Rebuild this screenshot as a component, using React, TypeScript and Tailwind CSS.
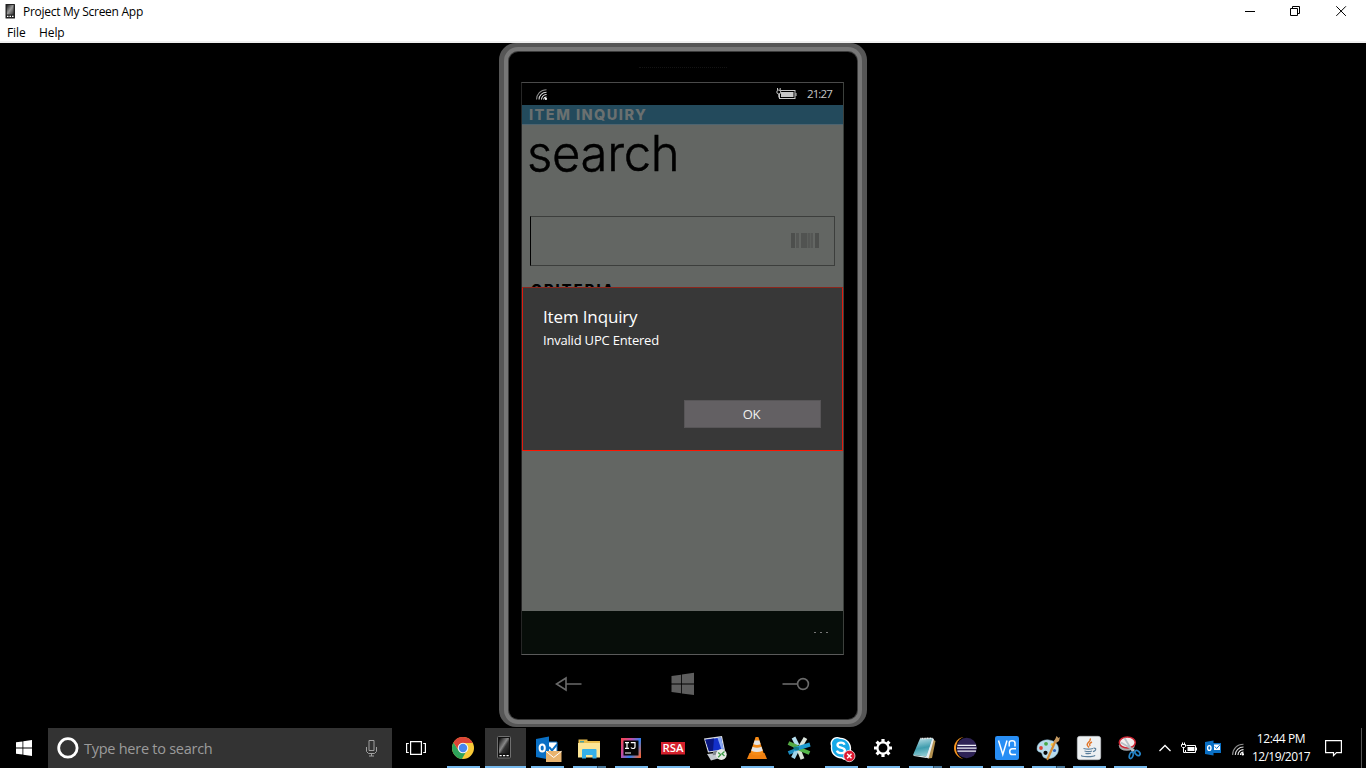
import type { ReactNode } from "react";

const UI = "font-['Open_Sans','Noto_Sans',sans-serif]";

function TitleBar() {
  return (
    <header className={`flex h-[43px] flex-col border-b-2 border-[#f0f0f0] bg-white text-black ${UI}`}>
      <div className="flex h-[23px] items-center">
        <svg className="ml-[5px] h-[16px] w-[10px]" viewBox="0 0 10 16">
          <defs>
            <linearGradient id="tp" x1="0" y1="0" x2="1" y2="1">
              <stop offset="0" stopColor="#222" />
              <stop offset="0.5" stopColor="#999" />
              <stop offset="1" stopColor="#333" />
            </linearGradient>
          </defs>
          <rect x="0.5" y="0" width="9.5" height="14.5" rx="0.6" fill="#222" />
          <rect x="1.8" y="1" width="6.800" height="9.500" fill="url(#tp)" />
          <path d="M2 12.400h1.500M4.500 12.400h1.500M7 12.400h1.500" stroke="#fff" strokeWidth="1.200" />
        </svg>
        <span className="ml-[8px] text-[12px] leading-[16px] tracking-[-0.27px] whitespace-nowrap">
          Project My Screen App
        </span>
        <div className="ml-auto flex h-full items-center">
          <svg className="h-[20px] w-[140px]" viewBox="0 0 140 20" fill="none" stroke="#000" strokeWidth="1">
            <path d="M19 9.500h10" />
            <path d="M64.500 6.500h7v7h-7zM66.500 6.500v-2h7v7h-2" />
            <path d="M110.300 4.300l9.600 9.600M119.900 4.300l-9.600 9.600" />
          </svg>
        </div>
      </div>
      <nav className="flex h-[18px] items-center pt-[2px] text-[12px] leading-[16px] whitespace-nowrap">
        <span className="ml-[7px] w-[32px] tracking-[-0.1px]">File</span>
        <span className="tracking-[-0.1px]">Help</span>
      </nav>
    </header>
  );
}

function Wifi({ className }: { className: string }) {
  return (
    <svg className={className} viewBox="0 0 12 12" fill="none" strokeWidth="1.1">
      <path d="M0.6 11.5C0.6 5.5 5 0.8 11.5 0.8" stroke="#8d8d8d" />
      <path d="M3.3 11.5C3.3 7 6.8 3.5 11.5 3.5" stroke="#d8d8d8" />
      <path d="M6 11.5C6 8.4 8.4 6.1 11.5 6.1" stroke="#f0f0f0" />
      <path d="M8.4 11.5A3 3 0 0 1 11.5 8.6" stroke="#fff" />
      <circle cx="10.8" cy="10.8" r="1.2" fill="#fff" />
    </svg>
  );
}

function Barcode() {
  return (
    <svg className="mb-[1px] h-[15px] w-[28px]" viewBox="0 0 28 15" fill="#4d4f4d">
      <rect x="0" width="4" height="15" />
      <rect x="5" width="3" height="15" fill="#555755" />
      <rect x="10" width="6" height="15" />
      <rect x="17" width="2" height="15" fill="#555755" />
      <rect x="20" width="2" height="15" fill="#555755" />
      <rect x="24" width="4" height="15" />
      <rect x="10" width="12" height="15" fill="#555755" opacity="0.5" />
    </svg>
  );
}

function Screen() {
  return (
    <div className="relative flex h-[573px] w-[323px] flex-col border border-t-[#4a4a4a] border-r-[#3c403c] border-b-[#5a5a5a] border-l-[#262626] bg-[#636663]">
      <div className="flex h-[22px] items-center bg-black">
        <Wifi className="ml-[14px] h-[11px] w-[11px]" />
        <svg className="ml-auto h-[12px] w-[21px]" viewBox="0 0 21 12" fill="none" stroke="#c8c8c8">
          <rect x="3.5" y="2.5" width="15.5" height="8" />
          <rect x="5" y="4" width="12.5" height="5" fill="#c8c8c8" stroke="none" />
          <path d="M20 5v3" />
          <circle cx="2.8" cy="4" r="2" fill="#000" />
          <path d="M1.5 0v2M4.2 0v2M2.8 6v3.5" />
        </svg>
        <span className={`mr-[10px] ml-[10px] w-[26px] text-[11.5px] leading-[14px] tracking-[-0.9px] whitespace-nowrap text-[#c6c6c6] ${UI}`}>
          21:27
        </span>
      </div>
      <div className="h-[20px] border-b border-[#4d6470] bg-[#234a5c] pl-[7px] font-['Inter',sans-serif] text-[14.5px] leading-[19px] font-extrabold tracking-[1.45px] whitespace-nowrap text-[#6a7070]">
        ITEM INQUIRY
      </div>
      <h1 className="mt-[-1px] ml-[5px] h-[60px] font-['Inter',sans-serif] text-[49px] leading-[60px] font-light tracking-[-0.3px] text-black [-webkit-text-stroke:0.5px_black]">
        search
      </h1>
      <div className="mt-[32px] ml-[8px] flex h-[50px] w-[305px] items-center justify-end border border-[#3c3e3c] border-l-black pr-[15px]">
        <Barcode />
      </div>
      <div className="mt-[14px] ml-[9px] h-[20px] font-['Inter',sans-serif] text-[14.5px] leading-[20px] font-extrabold tracking-[2.1px] whitespace-nowrap text-black">
        CRITERIA
      </div>
      <div className="mt-auto flex h-[43px] items-center justify-end bg-[#070d09] pr-[15px]">
        <div className="flex gap-[4px]">
          <i className="h-px w-[2px] bg-[#777]" />
          <i className="h-px w-[2px] bg-[#777]" />
          <i className="h-px w-[2px] bg-[#777]" />
        </div>
      </div>

      <div
        role="dialog"
        className={`absolute top-[204px] left-0 flex h-[164px] w-[321px] flex-col border border-t-[#8c261c] border-r-[#e01c10] border-b-[#ff1400] border-l-[#e01c10] bg-[#383838] text-white ${UI}`}
      >
        <div className="mt-[17px] ml-[20px] h-[25px] text-[17px] leading-[24px] tracking-[-0.15px] whitespace-nowrap">Item Inquiry</div>
        <div className="ml-[20px] text-[13px] leading-[21px] tracking-[-0.2px] whitespace-nowrap">Invalid UPC Entered</div>
        <button className="mt-auto mr-[21px] mb-[22px] ml-auto h-[28px] w-[137px] border border-[#575557] bg-[#636063] pr-[2px] text-[13px] leading-[26px] tracking-[-0.4px] text-[#f0f0f0]">
          OK
        </button>
      </div>
    </div>
  );
}

function Phone() {
  return (
    <div className="ml-[499px] h-[684px] w-[368px] rounded-[17px] bg-[#565656] px-[5px] pt-[4px] pb-[3px]">
      <div className="h-full rounded-[14px] bg-[#777777] px-[4px] py-[4px]">
        <div className="h-full rounded-[10px] bg-[#3c3c3c] p-px">
          <div className="flex h-full flex-col rounded-[9px] bg-black">
            <div className="mt-[15px] h-[15px] w-[88px] self-center border-t border-dotted border-[#141414]" />
            <div className="ml-[12px]">
              <Screen />
            </div>
            <div className="flex h-[58px] items-center">
              <svg className="ml-[46px] h-[16px] w-[27px]" viewBox="0 0 27 16" fill="none" stroke="#6a6a6a" strokeWidth="1.6">
                <path d="M11 2v12L1.5 8zM11 8h15.5" />
              </svg>
              <svg className="ml-[89px] h-[24px] w-[24px]" viewBox="0 0 24 24" fill="#5e5e5e">
                <path d="M0.5 4l9.500-1.300v8.900H0.5zM10.800 2.500l12.200-1.700v10.800H10.800zM0.500 12.500H10v8.800l-9.500-1.200zM10.800 12.500h12.200v10.500l-12.200-1.600z" />
              </svg>
              <svg className="ml-[87px] h-[16px] w-[28px]" viewBox="0 0 28 16" fill="none" stroke="#6a6a6a" strokeWidth="1.6">
                <circle cx="21" cy="8" r="5.400" />
                <path d="M0.5 8h15" />
              </svg>
            </div>
          </div>
        </div>
      </div>
    </div>
  );
}

function OutlookMark() {
  return (
    <g>
      <path d="M20 14h10v12H20z" fill="#fff" stroke="#0a70c5" strokeWidth="1" />
      <path d="M22 19l3 3.4 5-6" fill="none" stroke="#0a70c5" strokeWidth="2" />
      <path d="M9 11l13-2.4v23L9 29z" fill="#0a70c5" />
      <ellipse cx="15.2" cy="20" rx="2.6" ry="3.6" fill="none" stroke="#fff" strokeWidth="2" />
    </g>
  );
}

const icons: { name: string; art: ReactNode; run: "none" | "one" | "many"; active?: boolean; narrow?: boolean }[] = [
  {
    name: "Chrome",
    run: "one",
    art: (
      <g>
        <circle cx="20" cy="20" r="11" fill="#f9c938" />
        <path d="M10.5 14.5A11 11 0 0 0 18.9 31l5.2-9L20 20l-4.4 2.4z" fill="#2da25a" />
        <path d="M10.5 14.5A11 11 0 0 1 29.8 15H20a5 5 0 0 0-4.5 7.2z" fill="#dc4437" />
        <circle cx="20" cy="20" r="5.3" fill="#f4f4f4" />
        <circle cx="20" cy="20" r="4.2" fill="#4687f0" />
      </g>
    ),
  },
  {
    name: "Project My Screen",
    run: "one",
    active: true,
    art: (
      <g>
        <defs>
          <linearGradient id="ph" x1="0" y1="0" x2="1" y2="1">
            <stop offset="0" stopColor="#050505" />
            <stop offset="0.45" stopColor="#888" />
            <stop offset="0.6" stopColor="#333" />
            <stop offset="1" stopColor="#111" />
          </linearGradient>
        </defs>
        <rect x="12.500" y="8.500" width="13" height="21.500" rx="1" fill="#111" stroke="#707070" />
        <rect x="14" y="10" width="10" height="15.500" fill="url(#ph)" />
        <path d="M14.500 27.700h2.200M18 27.700h2.200M21.500 27.700h2.200" stroke="#fff" strokeWidth="1.200" />
      </g>
    ),
  },
  {
    name: "Outlook",
    run: "one",
    art: (
      <g>
        <OutlookMark />
        <path d="M19 23h15.500v11H19z" fill="#e8b46f" />
        <path d="M19 23.300l7.700 6.200 7.800-6.200" fill="none" stroke="#fff" strokeWidth="1" />
      </g>
    ),
  },
  {
    name: "Explorer",
    run: "many",
    art: (
      <g>
        <path d="M9.500 13v-1.500h9V13H31v16H9.500z" fill="#e9bd4e" />
        <path d="M9 15h22v14.500H9z" fill="#fce596" />
        <path d="M11 13h4v1.500h-4z" fill="#4aa3a5" />
        <path d="M13 30.500V22q0-1 1-1h12.500q1 0 1 1v8.500h-4V27h-6.500v3.500z" fill="#35b0e8" />
      </g>
    ),
  },
  {
    name: "IntelliJ",
    run: "one",
    art: (
      <g>
        <defs>
          <linearGradient id="ij" x1="0" y1="0.2" x2="1" y2="0.8">
            <stop offset="0" stopColor="#f0475a" />
            <stop offset="0.3" stopColor="#c44ba0" />
            <stop offset="0.65" stopColor="#2f80f0" />
            <stop offset="1" stopColor="#e96542" />
          </linearGradient>
        </defs>
        <rect x="10" y="10" width="20" height="20" fill="url(#ij)" />
        <rect x="12.500" y="12.500" width="15" height="15" fill="#050505" />
        <path d="M14 14.700h4M16 14.700v5.600M14 20.300h4M19.800 14.700h4.200v4q0 1.800-2.100 1.800-1.200 0-2-1M14 25h6" fill="none" stroke="#fff" strokeWidth="1.200" />
      </g>
    ),
  },
  {
    name: "RSA",
    run: "one",
    art: (
      <g>
        <rect x="8" y="14" width="24" height="12.500" fill="#d4202c" />
        <text x="9.500" y="24.300" fill="#fff" fontFamily="Open Sans" fontSize="10.500" fontWeight="600" textLength="21" lengthAdjust="spacingAndGlyphs">
          RSA
        </text>
      </g>
    ),
  },
  {
    name: "Remote Desktop",
    run: "none",
    art: (
      <g>
        <path d="M12 26l14-1.500 4 4-14 4z" fill="#c5c9cf" />
        <path d="M9 10.500l18-2.500 3 14.500-17 2z" fill="#d8dce2" />
        <path d="M10.300 11.700l15.700-2.200 2.500 12-14.500 1.700z" fill="#1330c9" />
        <path d="M10.300 11.700l8.700-1.200-1 12.200-4 .5z" fill="#0a1780" />
        <path d="M22.500 10l3.500-.5 2.500 12-2 .2z" fill="#8aa9f4" />
        <path d="M18 23.800l5-.6.800 3-6 1z" fill="#83878e" />
        <circle cx="26.300" cy="26.500" r="5.400" fill="#e8ebe6" />
        <path d="M23.200 24.500l2.500 2.300-2.500 2.400M29.500 23.500L27 25.800l2.500 2.300" fill="none" stroke="#3d9b47" strokeWidth="1.300" />
      </g>
    ),
  },
  {
    name: "VLC",
    run: "one",
    art: (
      <g>
        <path d="M12.500 25h15l2.500 6H10z" fill="#f08010" />
        <path d="M18.600 9h2.800l5.400 16.500q-6.800 4-13.600 0z" fill="#f58a16" />
        <path d="M17.600 12.500h4.800l1.200 3.700q-3.600 1.500-7.200 0zM15.500 18.800q4.500 1.800 9 0l1.300 4q-5.800 2.500-11.600 0z" fill="#e5e5e5" />
      </g>
    ),
  },
  {
    name: "Star",
    run: "none",
    art: (
      <g strokeWidth="4" transform="translate(-1 0)">
        <path d="M15.500 9.500l4 8" stroke="#b6dff0" />
        <path d="M27.500 10l-5 8.500" stroke="#dce5dd" />
        <path d="M10.500 15l10 4.500" stroke="#55a944" />
        <path d="M10.500 25l9-3.500" stroke="#1b8bbf" />
        <path d="M19.500 21l-4.500 9" stroke="#9fd4ea" />
        <path d="M20.500 21l4 10" stroke="#d6e2d3" />
        <path d="M21.500 21l10 4" stroke="#54b748" />
        <path d="M16 21.500l16-5" stroke="#1d9bd0" />
        <path d="M16 20l5 1" stroke="#127a85" strokeWidth="3" />
      </g>
    ),
  },
  {
    name: "Skype",
    run: "one",
    art: (
      <g>
        <path d="M16 9a7 7 0 0 1 3.500.8A10.500 10.500 0 0 1 30 22a6.500 6.500 0 0 1-9.500 8.500A10.500 10.500 0 0 1 10 18 6.500 6.500 0 0 1 16 9z" fill="#fff" />
        <path d="M16 10.300q1.600 0 3 .8a9.300 9.300 0 0 1 9.600 11 5.500 5.500 0 0 1-7.800 7A9.300 9.300 0 0 1 11.300 18 5.500 5.500 0 0 1 16 10.300z" fill="#17a9e8" />
        <path d="M23.500 16.800q-.6-2.100-3.500-2.100-3.500 0-3.500 2.400 0 1.900 3.500 2.600 3.900.8 3.900 3 0 2.500-3.900 2.500-3.300 0-4.100-2.500" fill="none" stroke="#fff" strokeWidth="2.300" />
        <circle cx="28.300" cy="28" r="5.700" fill="#dc1830" stroke="#fff" strokeWidth="0.700" />
        <path d="M26.100 25.800l4.400 4.400M30.500 25.800l-4.400 4.400" stroke="#fff" strokeWidth="1.400" />
      </g>
    ),
  },
  {
    name: "Settings",
    run: "one",
    art: (
      <g fill="none" stroke="#fff">
        <circle cx="20" cy="20" r="5.600" strokeWidth="2.300" />
        <path
          d="M20 11v3M20 26v3M11 20h3M26 20h3M13.600 13.600l2.200 2.200M24.200 24.200l2.200 2.200M13.600 26.400l2.200-2.200M24.200 15.800l2.200-2.200"
          strokeWidth="3.200"
        />
      </g>
    ),
  },
  {
    name: "Notepad",
    run: "many",
    narrow: true,
    art: (
      <g>
        <defs>
          <linearGradient id="np" x1="0.300" y1="0" x2="0.500" y2="1">
            <stop offset="0" stopColor="#b8dde5" />
            <stop offset="0.550" stopColor="#3f9dae" />
            <stop offset="1" stopColor="#92ced6" />
          </linearGradient>
        </defs>
        <path d="M27 11l3.500 2-3.500 17-4 .5z" fill="#b39150" />
        <path d="M27 10l2 1-5.500 19.500-3-1z" fill="#e8edf0" />
        <path d="M15 10.500l12.500-.5-6 18.500L8 27z" fill="url(#np)" />
        <path d="M8 27l13.500 1.500-.3 1.500L9 28z" fill="#d8eaec" />
        <path d="M15.500 10.500l11.800-.3" stroke="#f4f4f4" strokeWidth="1.500" strokeDasharray="1 .6" />
      </g>
    ),
  },
  {
    name: "Eclipse",
    run: "one",
    narrow: true,
    art: (
      <g>
        <circle cx="19" cy="20" r="11" fill="#f7941e" />
        <circle cx="22" cy="20" r="12" fill="#000" />
        <circle cx="20.700" cy="20" r="10.200" fill="#2e2255" />
        <path d="M11.500 17.300h18.500M11 20.200h19.500M11.500 23.100h18.500" stroke="#f0f0f8" strokeWidth="1.300" />
      </g>
    ),
  },
  {
    name: "VNC",
    run: "one",
    narrow: true,
    art: (
      <g>
        <rect x="8" y="8" width="24" height="24" rx="2.200" fill="#288ef5" />
        <path d="M11.500 12.500l4.300 14 4.200-14M22.200 18.600v-3.600q0-2.200 2.900-2.200t2.900 2.200v3.600M29 20.800h-3.500q-2.800 0-2.800 2.900t2.800 2.900H29" fill="none" stroke="#fff" strokeWidth="1.500" />
      </g>
    ),
  },
  {
    name: "Paint",
    run: "many",
    narrow: true,
    art: (
      <g>
        <path d="M21 12c-6-1-12 3-12 8.500 0 4 3 3 4.500 4.500 1.400 1.700 0 4.500 5 5.500 6 1 12-3 12-9.500 0-5-4-8.300-9.500-9z" fill="#b9dcec" stroke="#7fafc6" strokeWidth="0.500" />
        <circle cx="18" cy="15.800" r="1.900" fill="#45a948" />
        <circle cx="13" cy="20" r="1.900" fill="#db4535" />
        <circle cx="24.200" cy="16.500" r="1.500" fill="#f6c945" />
        <circle cx="26.500" cy="22.500" r="1.600" fill="#3267c0" />
        <circle cx="17.500" cy="24.800" r="2.100" fill="#080808" />
        <path d="M27.500 13L19.500 31" stroke="#d58c35" strokeWidth="2.200" strokeLinecap="round" />
        <path d="M26 13l1.500-2.500 1-2.500 2 2 1.500-1-1 4-3 2z" fill="#c79b62" />
      </g>
    ),
  },
  {
    name: "Java",
    run: "one",
    narrow: true,
    art: (
      <g fill="none">
        <rect x="8.300" y="8.300" width="23.400" height="23.400" rx="2.500" fill="#edf0f2" stroke="#c5cace" strokeWidth="0.600" />
        <path d="M21 10.500c2 3-4.500 4.200-2.500 7.200l1.500 1.800M23 14c-2.500 1.200-3 2.300-1.800 4" stroke="#e2762a" strokeWidth="1.400" />
        <path d="M14.500 20.500q5 1.200 9.500 0M15.500 23q4 1.200 7.500 0M16.500 25.300q3 .8 5.500 0M13 27.300q-1.500 1.200 5.500 1.400 7 0 7.500-1.400M24.500 20.200q3-.3 2 1.800-.6 1.200-2.500 1.700" stroke="#5b7f9c" strokeWidth="1.200" />
      </g>
    ),
  },
  {
    name: "Snipping Tool",
    run: "one",
    narrow: true,
    art: (
      <g fill="none" transform="translate(-0.5 0)">
        <ellipse cx="17.300" cy="17.500" rx="8" ry="5.300" fill="#a9a9a9" />
        <ellipse cx="17.800" cy="14.500" rx="8" ry="5.500" fill="#f3eeee" stroke="#cf2634" strokeWidth="1.600" />
        <path d="M15 10l8.500 14M11.500 14.500L25 22.500" stroke="#b6bfc6" strokeWidth="1.800" />
        <ellipse cx="21.800" cy="27.300" rx="1.800" ry="3.300" stroke="#2584c7" strokeWidth="1.700" transform="rotate(18 21.800 27.300)" />
        <ellipse cx="28" cy="25" rx="3" ry="2" stroke="#2584c7" strokeWidth="1.700" transform="rotate(45 28 25)" />
      </g>
    ),
  },
];

function TaskIcon({ item }: { item: (typeof icons)[number] }) {
  return (
    <div className={`flex h-[40px] flex-col ${item.narrow ? "w-[41px]" : "w-[42px]"}`}>
      <div className={`flex h-[38px] w-[41px] ${item.active ? "bg-[#333333]" : ""}`}>
        <svg className="h-[38px] w-[40px]" viewBox="0 0 40 38" aria-label={item.name}>
          {item.art}
        </svg>
      </div>
      <div className={item.active ? "flex h-[2px] w-[41px]" : "ml-[4px] flex h-[2px] w-[33px]"}>
        {item.run !== "none" && <div className="flex-1 bg-[#76b9ed]" />}
        {item.run === "many" && <div className="w-[9px] border-l border-[#2c4a60] bg-[#4a7799]" />}
      </div>
    </div>
  );
}

function Taskbar() {
  return (
    <footer className={`flex h-[40px] bg-black text-white ${UI}`}>
      <div className="flex w-[48px] items-center justify-center">
        <svg className="h-[16px] w-[16px]" viewBox="0 0 16 16" fill="#fff">
          <path d="M0 2.300L6.500 1.400v6.200H0zM7.300 1.300L16 0v7.600H7.300zM0 8.400h6.500v6.200L0 13.700zM7.300 8.400H16V16l-8.700-1.300z" />
        </svg>
      </div>
      <div className="flex w-[344px] items-center bg-[#333333]">
        <svg className="ml-[8px] h-[24px] w-[24px]" viewBox="0 0 24 24">
          <circle cx="11.900" cy="11.900" r="9.200" fill="none" stroke="#fff" strokeWidth="2.800" />
        </svg>
        <span className="ml-[4px] pt-[2px] text-[14.5px] leading-[20px] tracking-[-0.26px] whitespace-nowrap text-[#9b9b9b]">
          Type here to search
        </span>
        <svg className="mr-[14px] ml-auto h-[18px] w-[13px]" viewBox="0 0 13 18" fill="none" stroke="#a0a0a0">
          <path d="M4 1.500h5v10H4zM1.500 8v4.500l2 2h6l2-2V8M6.500 14.500v2.500M4 17h5" />
        </svg>
      </div>
      <div className="flex w-[51px] items-center pl-[14px]">
        <svg className="h-[16px] w-[20px]" viewBox="0 0 20 16" fill="none" stroke="#fff" strokeWidth="1.200">
          <path d="M4.600 1.600h10.800v12.800H4.600zM2.800 3.500H.6v9h2.200M17.200 3.500h2.200v9h-2.200" />
        </svg>
      </div>
      <div className="flex">
        {icons.map((item) => (
          <TaskIcon key={item.name} item={item} />
        ))}
      </div>
      <div className="flex flex-1 items-center">
        <svg className="ml-[7px] h-[8px] w-[14px]" viewBox="0 0 14 8" fill="none" stroke="#fff" strokeWidth="1.300">
          <path d="M1.500 7L7 1.500 12.500 7" />
        </svg>
        <svg className="ml-[9px] h-[12px] w-[16px]" viewBox="0 0 16 12" fill="none" stroke="#fff">
          <path d="M5.500 3.500h9v7h-10V8M15.500 5.500v3" />
          <path d="M6.500 5h7v4h-7z" fill="#fff" stroke="none" />
          <path d="M.5 2.500h4v2l-1 1h-2l-1-1zM1.500 2.500V.5M3.500 2.500V.5M2.500 6v4.500h2" />
        </svg>
        <svg className="ml-[8px] h-[16px] w-[16px]" viewBox="0 0 16 16">
          <path d="M7 3h9v10H7z" fill="#0a70c5" />
          <path d="M9 4.500h6V10H9z" fill="#fff" />
          <path d="M9.800 6.500l1.800 2L14.800 5" stroke="#0a70c5" fill="none" />
          <path d="M0 2l8.500-1.500v15L0 14z" fill="#0a70c5" />
          <ellipse cx="4.300" cy="8" rx="1.700" ry="2.400" fill="none" stroke="#fff" strokeWidth="1.400" />
        </svg>
        <Wifi className="mt-[3px] ml-[11px] h-[13px] w-[12px]" />
        <div className="ml-[7px] flex w-[60px] flex-col items-center text-[12px] leading-[18px] whitespace-nowrap">
          <span className="tracking-[-0.400px]">12:44 PM</span>
          <span className="tracking-[-0.55px]">12/19/2017</span>
        </div>
        <svg className="ml-[14px] h-[18px] w-[17px]" viewBox="0 0 17 18" fill="none" stroke="#fff" strokeWidth="1.200">
          <path d="M.6 1.600h15.800v12H11.500L8.500 16.600v-3H.6z" />
        </svg>
        <div className="mr-[4px] ml-auto h-full w-px bg-[#555]" />
      </div>
    </footer>
  );
}

export default function App() {
  return (
    <div className="flex h-[768px] w-[1366px] flex-col overflow-hidden bg-black">
      <TitleBar />
      <main className="h-[685px] bg-black">
        <Phone />
      </main>
      <Taskbar />
    </div>
  );
}
